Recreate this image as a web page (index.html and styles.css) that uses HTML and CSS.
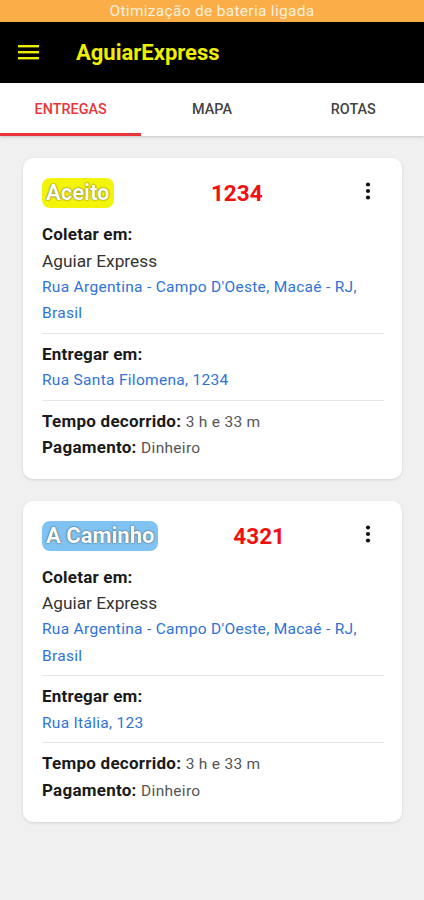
FILE: index.html
```html
<!DOCTYPE html>
<html lang="pt-BR">
<head>
<meta charset="utf-8">
<title>AguiarExpress</title>
<link rel="stylesheet" href="styles.css">
</head>
<body>
<div class="statusbar">Otimização de bateria ligada</div>
<header class="appbar">
  <svg class="menu" width="22" height="16" viewBox="0 0 22 16"><rect x="0" y="1" width="21" height="2.4" fill="#ecec00"/><rect x="0" y="7" width="21" height="2.4" fill="#ecec00"/><rect x="0" y="13" width="21" height="2.4" fill="#ecec00"/></svg>
  <h1 class="title">AguiarExpress</h1>
</header>
<nav class="tabs">
  <div class="tab active">ENTREGAS</div>
  <div class="tab">MAPA</div>
  <div class="tab">ROTAS</div>
</nav>
<main class="list">
  <article class="card">
    <div class="card-head">
      <span class="badge badge-yellow">Aceito</span>
      <span class="num">1234</span>
      <svg class="kebab" width="24" height="24" viewBox="0 0 24 24"><circle cx="12" cy="4.5" r="2.1"/><circle cx="12" cy="11" r="2.1"/><circle cx="12" cy="17.5" r="2.1"/></svg>
    </div>
    <section class="sec">
      <div class="label">Coletar em:</div>
      <div class="name">Aguiar Express</div>
      <div class="addr">Rua Argentina - Campo D'Oeste, Macaé - RJ, Brasil</div>
    </section>
    <section class="sec">
      <div class="label">Entregar em:</div>
      <div class="addr">Rua Santa Filomena, 1234</div>
    </section>
    <section class="sec last">
      <div class="row"><b>Tempo decorrido:</b> <span class="val">3 h e 33 m</span></div>
      <div class="row"><b>Pagamento:</b> <span class="val">Dinheiro</span></div>
    </section>
  </article>
  <article class="card">
    <div class="card-head">
      <span class="badge badge-blue">A Caminho</span>
      <span class="num">4321</span>
      <svg class="kebab" width="24" height="24" viewBox="0 0 24 24"><circle cx="12" cy="4.5" r="2.1"/><circle cx="12" cy="11" r="2.1"/><circle cx="12" cy="17.5" r="2.1"/></svg>
    </div>
    <section class="sec">
      <div class="label">Coletar em:</div>
      <div class="name">Aguiar Express</div>
      <div class="addr">Rua Argentina - Campo D'Oeste, Macaé - RJ, Brasil</div>
    </section>
    <section class="sec">
      <div class="label">Entregar em:</div>
      <div class="addr">Rua Itália, 123</div>
    </section>
    <section class="sec last">
      <div class="row"><b>Tempo decorrido:</b> <span class="val">3 h e 33 m</span></div>
      <div class="row"><b>Pagamento:</b> <span class="val">Dinheiro</span></div>
    </section>
  </article>
</main>
</body>
</html>
```
FILE: styles.css
```css
* { box-sizing: border-box; }
html, body { margin: 0; padding: 0; }
body {
  width: 424px;
  min-height: 900px;
  background: #f0f0f0;
  font-family: Roboto, "Liberation Sans", sans-serif;
  color: #222;
}
.statusbar {
  height: 22px;
  background: #fbad47;
  color: #fdf1dc;
  font-size: 15.5px;
  letter-spacing: 0.3px;
  line-height: 22px;
  text-align: center;
}
.appbar {
  height: 61px;
  background: #000;
  display: flex;
  align-items: center;
  padding-left: 18px;
}
.menu { display: block; margin-top: -2px; }
.title {
  margin: 0 0 0 36px;
  font-size: 22px;
  font-weight: 700;
  color: #eeee00;
}
.tabs {
  height: 53px;
  background: #fff;
  display: grid;
  grid-template-columns: repeat(3, 1fr);
  box-shadow: 0 1px 3px rgba(0,0,0,0.18);
  position: relative;
}
.tab {
  display: flex;
  align-items: center;
  justify-content: center;
  font-size: 14.4px;
  font-weight: 500;
  color: #444;
  border-bottom: 3px solid transparent;
  padding-top: 3px;
}
.tab.active { color: #e8343a; border-bottom-color: #e8343a; }
.list {
  padding: 22px 22px 22px 23px;
  display: flex;
  flex-direction: column;
  gap: 22px;
}
.card {
  background: #fff;
  border-radius: 10px;
  box-shadow: 0 1px 3px rgba(0,0,0,0.12);
  padding: 20px 18px 18px 19px;
}
.card-head {
  display: flex;
  align-items: center;
  height: 30px;
  margin-bottom: 13px;
}
.badge {
  height: 30px;
  padding: 0 4px 0 4px;
  border-radius: 8px;
  color: #fff;
  font-weight: 700;
  font-size: 22px;
  line-height: 30px;
  text-shadow: 0 0 2px rgba(0,0,0,0.55), 0 0 1px rgba(0,0,0,0.4);
}
.badge-yellow { background: #f4f40a; }
.badge-blue { background: #80c3f2; }
.num {
  flex: 1;
  text-align: center;
  color: #f01010;
  font-size: 22.5px;
  font-weight: 700;
  padding-left: 4px;
}
.kebab { fill: #111; margin-right: 4px; margin-top: -2px; }
.sec {
  padding-bottom: 6px;
  border-bottom: 1px solid #e6e6e6;
  margin-bottom: 7px;
  line-height: 26.5px;
}
.sec.last { border-bottom: 0; padding-bottom: 0; margin-bottom: 0; }
.label { font-weight: 700; font-size: 17px; letter-spacing: 0.2px; color: #1a1a1a; }
.name { font-size: 17.3px; color: #333; line-height: 26px; }
.addr { font-size: 15.5px; letter-spacing: 0.3px; color: #2f73d6; }
.row { font-size: 17px; letter-spacing: 0.25px; color: #1a1a1a; height: 26.7px; line-height: 26.7px; }
.row b { font-weight: 700; }
.val { font-size: 15.5px; letter-spacing: 0.3px; color: #555; line-height: 1; }
```
